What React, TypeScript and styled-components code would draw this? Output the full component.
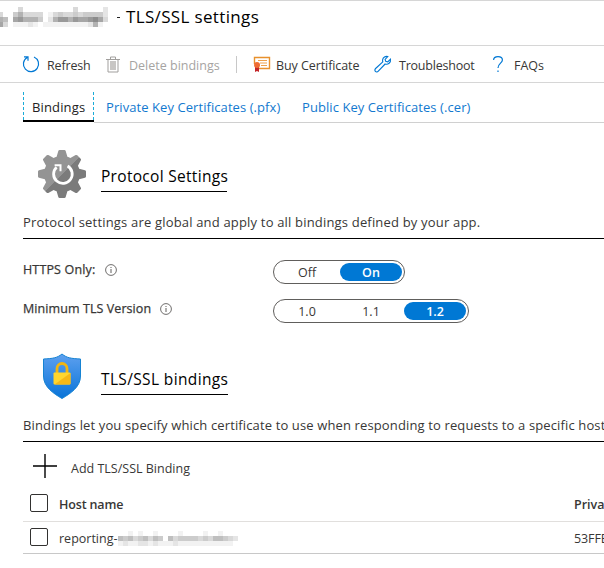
import React from "react";
import styled, { createGlobalStyle } from "styled-components";

const Global = createGlobalStyle`
  * { box-sizing: border-box; }
  body { margin: 0; background: #fff; overflow: hidden; }
`;

const Page = styled.main`
  width: 604px;
  height: 568px;
  overflow: hidden;
  background: #fff;
  color: #383736;
  font-family: "Open Sans", "Noto Sans", sans-serif;
  line-height: 20px;
  white-space: nowrap;
`;

const Label = styled.span<{ $w: number; $size?: number; $track?: number; $color?: string; $weight?: number }>`
  display: block;
  flex: none;
  width: ${(p) => p.$w}px;
  font-size: ${(p) => p.$size ?? 12.5}px;
  letter-spacing: ${(p) => p.$track ?? 0}px;
  color: ${(p) => p.$color ?? "inherit"};
  font-weight: ${(p) => p.$weight ?? 400};
`;

const ToolLabel = styled(Label)`
  padding-top: 3px;
`;

const TitleBar = styled.header`
  display: flex;
  align-items: center;
  height: 46px;
  padding-bottom: 12px;
  border-top: 1px solid #d6d6d6;
  border-bottom: 1px solid #d6d6d6;
  color: #000;
`;

const Dash = styled.i`
  width: 3px;
  height: 1px;
  margin: 0 6px 0 9px;
  background: #222;
`;

const Toolbar = styled.nav`
  display: flex;
  align-items: center;
  height: 37px;
  border-bottom: 1px solid #d6d6d6;
  padding-left: 22px;
`;

const Slot = styled.span<{ $w: number }>`
  display: flex;
  flex: none;
  width: ${(p) => p.$w}px;
`;

const Separator = styled.i`
  width: 1px;
  height: 17px;
  margin: 0 16px 0 17px;
  background: #c8c8c8;
`;

const Tabs = styled.nav`
  display: flex;
  height: 40px;
  padding: 9px 0 0 23px;
`;

const Tab = styled.div<{ $grow?: boolean }>`
  flex: ${(p) => (p.$grow ? "1" : "none")};
  height: 31px;
  padding: 5px 0 0 12px;
  color: #1279cf;
  border-bottom: 1px solid #d0d0d0;
`;

const dashes = "repeating-linear-gradient(#1aabd8 0 3px, transparent 3px 5px)";

const ActiveTab = styled.div`
  flex: none;
  height: 30px;
  padding: 5px 1px 0 9px;
  color: #222;
  border-bottom: 2px solid #000;
  background: ${dashes} left top / 1px 100% no-repeat, ${dashes} right top / 1px 100% no-repeat;
`;

const Section = styled.section<{ $h: number }>`
  height: ${(p) => p.$h}px;
  padding-left: 23px;
`;

const Heading = styled.div<{ $pad: number; $h: number }>`
  display: flex;
  height: ${(p) => p.$h}px;
  padding: ${(p) => p.$pad}px 0 0 15px;
`;

const HeadingText = styled.h2`
  height: 30px;
  margin: 12px 0 0 15px;
  padding-top: 4px;
  border-bottom: 1px solid #000;
  color: #000;
  font-weight: 400;
`;

const Description = styled.p`
  height: 27px;
  margin: 0;
  border-bottom: 1px solid #000;
`;

const Settings = styled.div`
  padding-top: 21px;
`;

const Setting = styled.div`
  display: flex;
  height: 39px;
`;

const SettingName = styled.div`
  display: flex;
  width: 250px;
  gap: 9px;
`;

const SettingLabel = styled(Label)`
  -webkit-text-stroke: 0.25px #383736;
`;

const InfoSvg = styled.svg`
  margin-top: 4px;
`;

const Toggle = styled.div`
  display: flex;
  height: 24px;
  padding: 2px;
  border: 1px solid #605e5c;
  border-radius: 12px;
`;

const Option = styled.div<{ $on?: boolean }>`
  display: flex;
  justify-content: center;
  width: ${(p) => (p.$on ? 62 : 64)}px;
  height: 18px;
  padding-right: ${(p) => (p.$on ? 0 : 2)}px;
  border-radius: 9px;
  line-height: 19px;
  background: ${(p) => (p.$on ? "#0078d4" : "transparent")};
  color: ${(p) => (p.$on ? "#fff" : "#383736")};
  font-size: 12.5px;
  font-weight: ${(p) => (p.$on ? 600 : 400)};
`;

const AddRow = styled.div`
  display: flex;
  align-items: flex-start;
  height: 45px;
  padding: 12px 0 0 10px;
`;

const AddLabel = styled(Label)`
  margin-top: 5px;
`;

const Row = styled.div<{ $h: number; $pad: number; $line: string }>`
  display: grid;
  grid-template-columns: 29px 515px auto;
  height: ${(p) => p.$h}px;
  padding: ${(p) => p.$pad}px 0 0 7px;
  border-bottom: 1px solid ${(p) => p.$line};
`;

const Cell = styled(Label)`
  padding-top: 1px;
`;

const Checkbox = styled.span`
  width: 18px;
  height: 18px;
  border: 1px solid #323130;
  border-radius: 2px;
`;

const Host = styled.div`
  display: flex;
`;

const HostMask = styled.div`
  display: flex;
  height: 15px;
  margin-top: 3px;
`;

/* Redacted text is drawn as a grid of grey cells, one hex digit of darkness per cell. */
function Mosaic({ rows, width, shift = 0 }: { rows: string[]; width: number; shift?: number }) {
  const cell = 5;
  return (
    <svg width={width} height={rows.length * cell} shapeRendering="crispEdges">
      {rows.flatMap((r, y) =>
        r.split("").map((c, x) => (
          <rect key={`${x}-${y}`} x={x * cell - shift} y={y * cell} width={cell} height={cell} fill="#000" opacity={parseInt(c, 16) / 20} />
        ))
      )}
    </svg>
  );
}

const InfoIcon = () => (
  <InfoSvg width="12" height="12" viewBox="0 0 12 12" fill="none" stroke="#605e5c">
    <circle cx="6" cy="6" r="5.4" strokeWidth=".9" />
    <path d="M6 5v4M6 3v1" />
  </InfoSvg>
);

const Gear = () => (
  <svg width="48" height="48" viewBox="0 0 48 48">
    <defs>
      <linearGradient id="gear" gradientUnits="userSpaceOnUse" x1="0" y1="0" x2="48" y2="48">
        <stop offset=".51" stopColor="#949494" />
        <stop offset=".51" stopColor="#7b7b7b" />
      </linearGradient>
      <clipPath id="gearShape">
        <circle cx="24" cy="24" r="18" />
        {[0, 45, 90, 135, 180, 225, 270, 315].map((a) => (
          <path key={a} d="M18 9L20.3 1Q20.6 0 21.600 0h4.800Q27.400 0 27.700 1L30 9z" transform={`rotate(${a} 24 24)`} />
        ))}
      </clipPath>
    </defs>
    <rect width="48" height="48" fill="url(#gear)" clipPath="url(#gearShape)" />
    <path d="M29.6 16A9.3 9.3 0 1 1 18.6 17.2" fill="none" stroke="#fff" strokeWidth="2.8" />
    <path d="M16.6 15.3h5.9v6" fill="none" stroke="#fff" strokeWidth="2" />
  </svg>
);

const Shield = () => (
  <svg width="48" height="48" viewBox="0 0 48 48">
    <defs>
      <linearGradient id="shield" x1="0" y1="0" x2="0" y2="1">
        <stop stopColor="#5ea0ef" />
        <stop offset="1" stopColor="#0874d8" />
      </linearGradient>
    </defs>
    <path d="M24 1c5 4 9 4.5 18.5 5v17c0 11-10 17.5-18.5 22.5C15.5 40.5 5.5 34 5.5 23V6C15 5.5 19 5 24 1z" fill="url(#shield)" stroke="#1683d3" />
    <path d="M19 20v-4.500a5 5 0 0 1 10 0V20" fill="none" stroke="#f2b510" strokeWidth="2.8" />
    <rect x="15.5" y="19.5" width="17" height="12" rx="1" fill="#ffd62e" />
    <path d="M32.5 20v10.5q0 1-1 1H16.5z" fill="#f6b817" />
  </svg>
);

export default function App() {
  return (
    <Page>
      <Global />
      <TitleBar>
        <Mosaic width={108} shift={2} rows={["0000300000000003000002", "3004633330134334344442", "6507866640268868778973", "7301112101111111112610"]} />
        <Dash />
        <Label $w={140} $size={17} $track={0.35}>TLS/SSL settings</Label>
      </TitleBar>
      <Toolbar>
        <Slot $w={25}>
          <svg width="18" height="18" viewBox="0 0 18 18" fill="none" stroke="#0078d4" strokeWidth="1.2"><path d="M12 2A7.6 7.6 0 1 1 5.2 2.4M2 1.8h4v4" /></svg>
        </Slot>
        <ToolLabel $w={59} $track={-0.15}>Refresh</ToolLabel>
        <Slot $w={23}>
          <svg width="14" height="17" viewBox="0 0 14 17" fill="none" stroke="#a19f9d"><path d="M0 3.5h14M4.5 3V1h5v2M2 4v12h10V4" /><path d="M4 5h6v9H4z" fill="#c8c6c4" stroke="none" /></svg>
        </Slot>
        <ToolLabel $w={90} $color="#a6a4a2">Delete bindings</ToolLabel>
        <Separator />
        <Slot $w={23}>
          <svg width="18" height="17" viewBox="0 0 18 17" fill="none"><path d="M1.5 8V1.5h15v11H6" stroke="#e8912d" strokeWidth="1.4" /><path d="M5 4.5h9M7 7h7M8 9.5h6" stroke="#eda14d" /><path d="M2 10h4v6l-2-1-2 1z" fill="#c32428" /><circle cx="4" cy="9" r="3" fill="#ef6c32" /></svg>
        </Slot>
        <ToolLabel $w={98} $track={-0.08}>Buy Certificate</ToolLabel>
        <Slot $w={25}>
          <svg width="18" height="18" viewBox="0 0 18 18" fill="none" stroke="#0078d4" strokeWidth="1.1"><path d="M16.5 4.2l-2.8 2.8-2-.6-.6-2 2.7-2.8C11.5.8 9 2.5 8.6 4.8c-.1.8 0 1.5.2 2.1l-7.2 6.6c-1 1-.9 2.2-.2 2.9s2 .8 2.9-.2l6.8-7.2c2.9.9 6-1.4 5.4-4.8z" /></svg>
        </Slot>
        <ToolLabel $w={94} $track={-0.22}>Troubleshoot</ToolLabel>
        <Slot $w={21}>
          <svg width="10" height="17" viewBox="0 0 10 17" fill="none" stroke="#0078d4" strokeWidth="1.2"><path d="M.6 4C.6-.4 9.4-.4 9.4 4c0 3-4.4 3.5-4.4 8M5 14.5V16" /></svg>
        </Slot>
        <ToolLabel $w={32}>FAQs</ToolLabel>
      </Toolbar>
      <Tabs>
        <ActiveTab><Label $w={61} $size={13} $track={0.14}>Bindings</Label></ActiveTab>
        <Tab><Label $w={184} $size={13} $track={0.07}>Private Key Certificates (.pfx)</Label></Tab>
        <Tab $grow><Label $w={170} $size={13} $track={0.07}>Public Key Certificates (.cer)</Label></Tab>
      </Tabs>
      <Section $h={222}>
        <Heading $pad={27} $h={89}>
          <Gear />
          <HeadingText><Label $w={126} $size={15.5} $track={0.3}>Protocol Settings</Label></HeadingText>
        </Heading>
        <Description><Label $w={458} $size={13} $track={0.18}>Protocol settings are global and apply to all bindings defined by your app.</Label></Description>
        <Settings>
          <Setting>
            <SettingName><SettingLabel $w={73} $track={0.15}>HTTPS Only:</SettingLabel><InfoIcon /></SettingName>
            <Toggle><Option>Off</Option><Option $on>On</Option></Toggle>
          </Setting>
          <Setting>
            <SettingName><SettingLabel $w={128} $track={0.08}>Minimum TLS Version</SettingLabel><InfoIcon /></SettingName>
            <Toggle><Option>1.0</Option><Option>1.1</Option><Option $on>1.2</Option></Toggle>
          </Setting>
        </Settings>
      </Section>
      <Section $h={223}>
        <Heading $pad={8} $h={70}>
          <Shield />
          <HeadingText><Label $w={127} $size={15.5} $track={0.36}>TLS/SSL bindings</Label></HeadingText>
        </Heading>
        <Description><Label $w={581} $size={13} $track={0.13}>Bindings let you specify which certificate to use when responding to requests to a specific host</Label></Description>
        <AddRow>
          <Slot $w={38}><svg width="24" height="24"><path d="M12 0v24M0 12h24" stroke="#000" strokeWidth="1.4" /></svg></Slot>
          <AddLabel $w={120}>Add TLS/SSL Binding</AddLabel>
        </AddRow>
        <Row $h={35} $pad={7} $line="#e1dfdd"><Checkbox /><Cell $w={66} $weight={600} $track={-0.15}>Host name</Cell><Cell $w={90} $weight={600}>Private</Cell></Row>
        <Row $h={32} $pad={6} $line="#c8c8c8">
          <Checkbox />
          <Host>
            <Cell $w={59}>reporting-</Cell>
            <HostMask><Mosaic width={121} rows={["001010010000100001001000", "545345354053444434355432", "121122121112111111111110"]} /></HostMask>
          </Host>
          <Cell $w={90} $track={-0.1}>53FFE</Cell>
        </Row>
      </Section>
    </Page>
  );
}
